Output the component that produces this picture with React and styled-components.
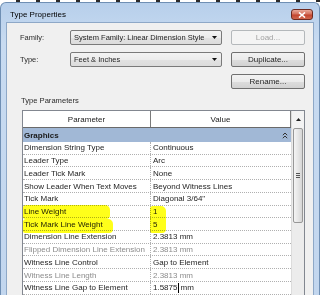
import styled, { createGlobalStyle } from 'styled-components';

const GlobalStyle = createGlobalStyle`
  html, body {
    margin: 0;
    padding: 0;
    background: #fff;
  }
  body {
    font-family: "Liberation Sans", Arial, sans-serif;
    font-size: 8px;
    color: #1e1e1e;
  }
`;

const Screen = styled.div`
  width: 320px;
  height: 295px;
  overflow: hidden;
  display: flex;
  flex-direction: column;
`;

const Backdrop = styled.div`
  flex: none;
  height: 2px;
  background: repeating-linear-gradient(90deg, #fff 0 16px, #2a2a2a 16px 20px);
`;

const Window = styled.div`
  flex: 1;
  display: flex;
  flex-direction: column;
  min-height: 0;
  padding: 0 5px;
  border: 1px solid #6f8fb4;
  border-bottom: none;
  border-radius: 6px 6px 0 0;
  background: linear-gradient(180deg, #b7cfeb 0, #c8dbf1 40px, #c2d6ee 100%);
`;

const TitleBar = styled.div`
  flex: none;
  height: 19px;
  padding-top: 4px;
  box-sizing: border-box;
  display: flex;
  align-items: center;
  justify-content: space-between;
`;

const Title = styled.span`
  margin-left: 4px;
  font-size: 8px;
  color: #000;
`;

const CloseButton = styled.div`
  width: 22px;
  height: 11px;
  margin-right: 1px;
  box-sizing: border-box;
  border: 1px solid #6e2a20;
  border-radius: 3px;
  background: linear-gradient(180deg, #e9a99a 0, #d4705c 45%, #c3452f 55%, #d0664d 100%);
  display: flex;
  align-items: center;
  justify-content: center;
`;

const Content = styled.div`
  flex: 1;
  min-height: 0;
  background: #f0f0f0;
  border: 1px solid #8ea8c7;
  border-bottom: none;
  padding-top: 7px;
`;

const FormGrid = styled.div`
  display: grid;
  grid-template-columns: 41px 152px 74px;
  grid-auto-rows: 15px;
  column-gap: 9px;
  row-gap: 7px;
  padding-left: 13px;
  font-size: 7.5px;
`;

const Label = styled.span`
  display: flex;
  align-items: center;
  color: #2b2b2b;
`;

const Combo = styled.div`
  box-sizing: border-box;
  border: 1px solid #7a7a7a;
  border-radius: 2px;
  background: linear-gradient(180deg, #f3f3f3 0, #ececec 50%, #e2e2e2 51%, #dcdcdc 100%);
  display: flex;
  align-items: center;
  justify-content: space-between;
  padding: 0 4px 0 3px;
  white-space: nowrap;
  color: #1e1e1e;
`;

const Button = styled.div`
  box-sizing: border-box;
  border: 1px solid ${(p) => (p.disabled ? '#b4b8bb' : '#707070')};
  border-radius: 2px;
  background: ${(p) =>
    p.disabled
      ? '#f4f4f4'
      : 'linear-gradient(180deg, #f2f2f2 0, #ebebeb 50%, #dddddd 51%, #d2d2d2 100%)'};
  color: ${(p) => (p.disabled ? '#a3a3a3' : '#1e1e1e')};
  font-size: 8px;
  display: flex;
  align-items: center;
  justify-content: center;
`;

const SectionLabel = styled.div`
  margin: 7px 0 4px 14px;
  line-height: 10px;
  font-size: 7.6px;
  color: #2b2b2b;
`;

const Table = styled.div`
  margin-left: 15px;
  width: 283px;
  box-sizing: border-box;
  border: 1px solid #828790;
  border-bottom: none;
  display: flex;
  background: #fff;
`;

const Main = styled.div`
  width: 268px;
`;

const HeaderRow = styled.div`
  display: grid;
  grid-template-columns: 128px 140px;
  height: 16px;
  border-bottom: 1px solid #6a6a6a;
`;

const HeaderCell = styled.div`
  display: flex;
  align-items: center;
  justify-content: center;
  border-right: 1px solid #7a7a7a;
  color: #222;
`;

const Body = styled.div`
  position: relative;
`;

const GroupRow = styled.div`
  height: 14px;
  box-sizing: border-box;
  background: #a1b8d6;
  display: flex;
  align-items: center;
  justify-content: space-between;
  padding: 0 3px 0 1px;
  font-weight: bold;
  color: #1a1a1a;
`;

const Row = styled.div`
  display: grid;
  grid-template-columns: 128px 140px;
  height: 12.73px;
  box-sizing: border-box;
  border-bottom: 1px dotted #b0b0b0;
  color: ${(p) => (p.dim ? '#8c8c8c' : '#1e1e1e')};
`;

const Cell = styled.div`
  display: flex;
  align-items: center;
  white-space: nowrap;
  overflow: hidden;
  padding-left: ${(p) => (p.value ? '2px' : '1px')};
  border-right: ${(p) => (p.value ? 'none' : '1px dotted #b0b0b0')};
`;

const Caret = styled.span`
  display: inline-block;
  width: 1px;
  height: 10px;
  background: #000;
  margin: 0 1px 0 1px;
`;

const Marker = styled.div`
  position: absolute;
  background: #ffff1a;
  mix-blend-mode: multiply;
  border-radius: 3px 5px 4px 2px;
`;

const ScrollBar = styled.div`
  width: 13px;
  box-sizing: border-box;
  border-left: 1px solid #dcdcdc;
  background: #ececec;
  display: flex;
  flex-direction: column;
  align-items: center;
`;

const ScrollArrow = styled.div`
  flex: none;
  height: 17px;
  width: 100%;
  background: #f3f3f3;
  display: flex;
  align-items: center;
  justify-content: center;
`;

const Thumb = styled.div`
  width: 10px;
  height: 95px;
  box-sizing: border-box;
  border: 1px solid #979797;
  border-radius: 2px;
  background: linear-gradient(90deg, #f4f4f4 0, #e6e6e6 50%, #d6d6d6 100%);
  display: flex;
  align-items: center;
  justify-content: center;
`;

const rows = [
  { name: 'Dimension String Type', value: 'Continuous' },
  { name: 'Leader Type', value: 'Arc' },
  { name: 'Leader Tick Mark', value: 'None' },
  { name: 'Show Leader When Text Moves', value: 'Beyond Witness Lines' },
  { name: 'Tick Mark', value: 'Diagonal 3/64"' },
  { name: 'Line Weight', value: '1' },
  { name: 'Tick Mark Line Weight', value: '5' },
  { name: 'Dimension Line Extension', value: '2.3813 mm' },
  { name: 'Flipped Dimension Line Extension', value: '2.3813 mm', dim: true },
  { name: 'Witness Line Control', value: 'Gap to Element' },
  { name: 'Witness Line Length', value: '2.3813 mm', dim: true },
  { name: 'Witness Line Gap to Element', value: '1.5875', caret: true },
  { name: '', value: '' },
];

function DownArrow() {
  return (
    <svg width="5" height="3" viewBox="0 0 5 3">
      <path d="M0 0h5L2.5 3z" fill="#111" />
    </svg>
  );
}

export default function App() {
  return (
    <>
      <GlobalStyle />
      <Screen>
        <Backdrop />
        <Window>
          <TitleBar>
            <Title>Type Properties</Title>
            <CloseButton>
              <svg width="8" height="6" viewBox="0 0 8 6">
                <path d="M1 0.5l6 5M7 0.5l-6 5" stroke="#fff" strokeWidth="1.6" />
              </svg>
            </CloseButton>
          </TitleBar>
          <Content>
            <FormGrid>
              <Label>Family:</Label>
              <Combo>
                <span>System Family: Linear Dimension Style</span>
                <DownArrow />
              </Combo>
              <Button disabled>Load...</Button>
              <Label>Type:</Label>
              <Combo>
                <span>Feet &amp; Inches</span>
                <DownArrow />
              </Combo>
              <Button>Duplicate...</Button>
              <span />
              <span />
              <Button>Rename...</Button>
            </FormGrid>
            <SectionLabel>Type Parameters</SectionLabel>
            <Table>
              <Main>
                <HeaderRow>
                  <HeaderCell>Parameter</HeaderCell>
                  <HeaderCell>Value</HeaderCell>
                </HeaderRow>
                <Body>
                  <GroupRow>
                    <span>Graphics</span>
                    <svg width="6" height="7" viewBox="0 0 6 7">
                      <path d="M0.8 3.2L3 1l2.2 2.2M0.8 6.2L3 4l2.2 2.2" stroke="#333" strokeWidth="1" fill="none" />
                    </svg>
                  </GroupRow>
                  {rows.map((r, i) => (
                    <Row key={i} dim={r.dim}>
                      <Cell>{r.name}</Cell>
                      <Cell value>
                        {r.value}
                        {r.caret && (
                          <>
                            <Caret />
                            mm
                          </>
                        )}
                      </Cell>
                    </Row>
                  ))}
                  <Marker style={{ left: 0, top: 77, width: 87, height: 14 }} />
                  <Marker style={{ left: 0, top: 91, width: 90, height: 14 }} />
                  <Marker style={{ left: 127, top: 78, width: 16, height: 27 }} />
                </Body>
              </Main>
              <ScrollBar>
                <ScrollArrow>
                  <svg width="5" height="3" viewBox="0 0 5 3">
                    <path d="M0 3h5L2.5 0z" fill="#222" />
                  </svg>
                </ScrollArrow>
                <Thumb>
                  <svg width="4" height="5" viewBox="0 0 4 5">
                    <path d="M0 0.5h4M0 2.5h4M0 4.5h4" stroke="#555" strokeWidth="1" />
                  </svg>
                </Thumb>
              </ScrollBar>
            </Table>
          </Content>
        </Window>
      </Screen>
    </>
  );
}
